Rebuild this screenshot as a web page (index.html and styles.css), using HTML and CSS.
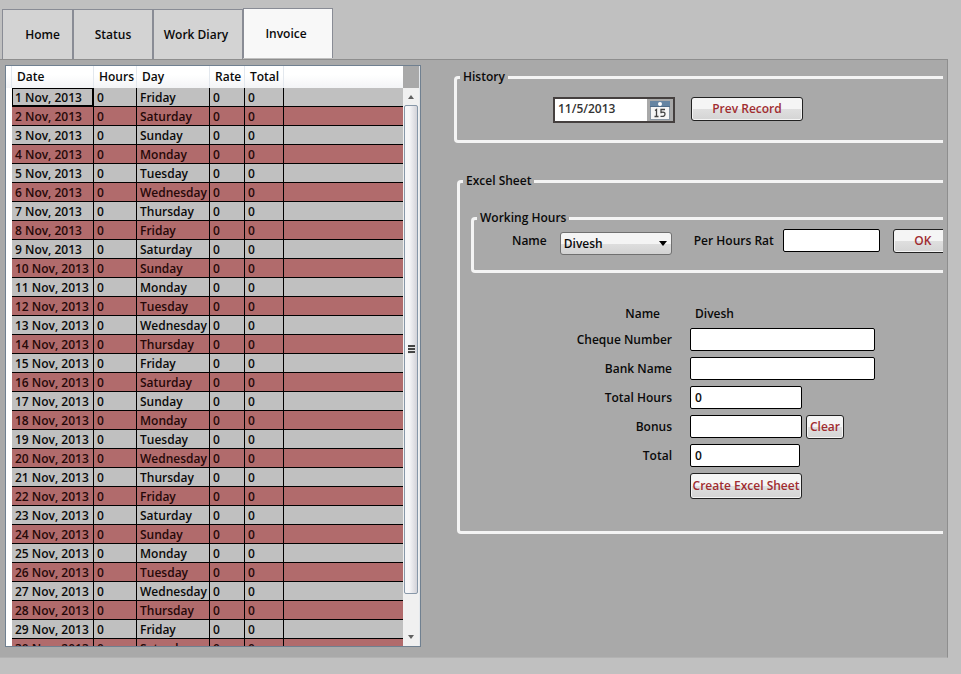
FILE: index.html
```html
<!DOCTYPE html>
<html lang="en">
<head>
<meta charset="utf-8">
<title>Invoice</title>
<link rel="stylesheet" href="styles.css">
</head>
<body>
<nav class="tabs">
  <button class="tab tab-home" type="button">Home</button>
  <button class="tab tab-status" type="button">Status</button>
  <button class="tab" type="button">Work Diary</button>
  <button class="tab active" type="button">Invoice</button>
</nav>
<main class="panel">
  <section class="grid">
    <div class="viewport">
      <table class="hours">
        <colgroup><col class="c-head"><col class="c-date"><col class="c-hours"><col class="c-day"><col class="c-rate"><col class="c-total"><col></colgroup>
        <thead><tr><th></th><th>Date</th><th>Hours</th><th>Day</th><th>Rate</th><th>Total</th><th></th></tr></thead>
        <tbody>
          <tr><td></td><td class="current">1 Nov, 2013</td><td>0</td><td>Friday</td><td>0</td><td>0</td><td></td></tr>
          <tr><td></td><td>2 Nov, 2013</td><td>0</td><td>Saturday</td><td>0</td><td>0</td><td></td></tr>
          <tr><td></td><td>3 Nov, 2013</td><td>0</td><td>Sunday</td><td>0</td><td>0</td><td></td></tr>
          <tr><td></td><td>4 Nov, 2013</td><td>0</td><td>Monday</td><td>0</td><td>0</td><td></td></tr>
          <tr><td></td><td>5 Nov, 2013</td><td>0</td><td>Tuesday</td><td>0</td><td>0</td><td></td></tr>
          <tr><td></td><td>6 Nov, 2013</td><td>0</td><td>Wednesday</td><td>0</td><td>0</td><td></td></tr>
          <tr><td></td><td>7 Nov, 2013</td><td>0</td><td>Thursday</td><td>0</td><td>0</td><td></td></tr>
          <tr><td></td><td>8 Nov, 2013</td><td>0</td><td>Friday</td><td>0</td><td>0</td><td></td></tr>
          <tr><td></td><td>9 Nov, 2013</td><td>0</td><td>Saturday</td><td>0</td><td>0</td><td></td></tr>
          <tr><td></td><td>10 Nov, 2013</td><td>0</td><td>Sunday</td><td>0</td><td>0</td><td></td></tr>
          <tr><td></td><td>11 Nov, 2013</td><td>0</td><td>Monday</td><td>0</td><td>0</td><td></td></tr>
          <tr><td></td><td>12 Nov, 2013</td><td>0</td><td>Tuesday</td><td>0</td><td>0</td><td></td></tr>
          <tr><td></td><td>13 Nov, 2013</td><td>0</td><td>Wednesday</td><td>0</td><td>0</td><td></td></tr>
          <tr><td></td><td>14 Nov, 2013</td><td>0</td><td>Thursday</td><td>0</td><td>0</td><td></td></tr>
          <tr><td></td><td>15 Nov, 2013</td><td>0</td><td>Friday</td><td>0</td><td>0</td><td></td></tr>
          <tr><td></td><td>16 Nov, 2013</td><td>0</td><td>Saturday</td><td>0</td><td>0</td><td></td></tr>
          <tr><td></td><td>17 Nov, 2013</td><td>0</td><td>Sunday</td><td>0</td><td>0</td><td></td></tr>
          <tr><td></td><td>18 Nov, 2013</td><td>0</td><td>Monday</td><td>0</td><td>0</td><td></td></tr>
          <tr><td></td><td>19 Nov, 2013</td><td>0</td><td>Tuesday</td><td>0</td><td>0</td><td></td></tr>
          <tr><td></td><td>20 Nov, 2013</td><td>0</td><td>Wednesday</td><td>0</td><td>0</td><td></td></tr>
          <tr><td></td><td>21 Nov, 2013</td><td>0</td><td>Thursday</td><td>0</td><td>0</td><td></td></tr>
          <tr><td></td><td>22 Nov, 2013</td><td>0</td><td>Friday</td><td>0</td><td>0</td><td></td></tr>
          <tr><td></td><td>23 Nov, 2013</td><td>0</td><td>Saturday</td><td>0</td><td>0</td><td></td></tr>
          <tr><td></td><td>24 Nov, 2013</td><td>0</td><td>Sunday</td><td>0</td><td>0</td><td></td></tr>
          <tr><td></td><td>25 Nov, 2013</td><td>0</td><td>Monday</td><td>0</td><td>0</td><td></td></tr>
          <tr><td></td><td>26 Nov, 2013</td><td>0</td><td>Tuesday</td><td>0</td><td>0</td><td></td></tr>
          <tr><td></td><td>27 Nov, 2013</td><td>0</td><td>Wednesday</td><td>0</td><td>0</td><td></td></tr>
          <tr><td></td><td>28 Nov, 2013</td><td>0</td><td>Thursday</td><td>0</td><td>0</td><td></td></tr>
          <tr><td></td><td>29 Nov, 2013</td><td>0</td><td>Friday</td><td>0</td><td>0</td><td></td></tr>
          <tr><td></td><td>30 Nov, 2013</td><td>0</td><td>Saturday</td><td>0</td><td>0</td><td></td></tr>
        </tbody>
      </table>
    </div>
    <div class="scrollbar">
      <div class="corner"></div>
      <svg class="arrow" viewBox="0 0 16 17"><path d="M5 11 8 7l3 4z"/></svg>
      <div class="thumb"><span class="grip"></span></div>
      <svg class="arrow" viewBox="0 0 16 17"><path d="M5 6h6l-3 4z"/></svg>
    </div>
  </section>

  <section class="forms">
    <fieldset class="history">
      <legend>History</legend>
      <div class="history-row">
        <div class="datepicker">
          <input type="text" value="11/5/2013" aria-label="Record date">
          <button type="button" aria-label="Open calendar">
            <svg viewBox="0 0 20 19">
              <rect x=".5" y=".5" width="19" height="18" fill="#f6f6f6" stroke="#8b98a5"/>
              <path d="M0 0h20v6H0z" fill="#6685a3"/>
              <path d="M0 5h20v1H0z" fill="#4f6c89"/>
              <circle cx="10" cy="3" r="2" fill="#fff"/>
              <path d="M5 9.500 6.500 8.500V15.500M4.500 15.500h4M15 8.500h-4v3q4-1 4 1.500 0 3-4.500 2.300" fill="none" stroke="#444" stroke-width="1.300"/>
            </svg>
          </button>
        </div>
        <button class="btn prev" type="button">Prev Record</button>
      </div>
    </fieldset>

    <fieldset class="sheet">
      <legend>Excel Sheet</legend>
      <div class="sheet-body">
        <fieldset class="working">
          <legend>Working Hours</legend>
          <div class="working-row">
            <label for="employee">Name</label>
            <div class="combo">
              <select id="employee"><option>Divesh</option></select>
              <svg viewBox="0 0 8 5"><path d="M0 0h8L4 5z"/></svg>
            </div>
            <label for="rate">Per Hours Rat</label>
            <input class="field rate" id="rate" type="text">
            <button class="btn ok" type="button">OK</button>
          </div>
        </fieldset>
        <div class="details">
          <span class="name-label">Name</span><output class="name-value">Divesh</output>
          <label for="cheque">Cheque Number</label><input class="field wide" id="cheque" type="text">
          <label for="bank">Bank Name</label><input class="field wide" id="bank" type="text">
          <label for="total-hours">Total Hours</label><input class="field" id="total-hours" type="text" value="0">
          <label for="bonus">Bonus</label>
          <div class="bonus-row"><input class="field" id="bonus" type="text"><button class="btn clear" type="button">Clear</button></div>
          <label for="total">Total</label><input class="field total" id="total" type="text" value="0">
          <button class="btn create" type="button">Create Excel Sheet</button>
        </div>
      </div>
    </fieldset>
  </section>
</main>
</body>
</html>
```
FILE: styles.css
```css
* { box-sizing: border-box; }

body {
  margin: 0;
  min-height: 100vh;
  padding: 8px 13px 16px 0;
  display: flex;
  flex-direction: column;
  background: #c0c0c0;
  color: #0a0a0a;
  font: 600 12px/16px "Open Sans", "Noto Sans", sans-serif;
}

button, input, select { font: inherit; color: inherit; }

.tabs { display: flex; align-items: flex-end; padding-left: 2px; height: 51px; }

.tab {
  height: 50px;
  width: 90px;
  padding: 0 4px 0 0;
  background: #d3d3d3;
  border: 1px solid #898c95;
  border-bottom: 0;
}
.tab-home { width: 71px; padding: 0 0 0 10px; }
.tab-status { width: 80px; padding: 0; }
.tab.active { align-self: flex-start; background: #f8f8f8; }

.panel {
  flex: 1;
  display: flex;
  gap: 33px;
  padding: 5px 4px 10px 5px;
  background: #a9a9a9;
  border: 1px solid #8e8e8e;
  border-left: 0;
  border-bottom-color: #b2b2b2;
}

/* Day-by-day data grid */
.grid {
  flex: none;
  width: 416px;
  display: flex;
  border: 1px solid #708090;
  background: #fff;
}
.viewport { flex: 1; height: 0; min-height: 100%; overflow: hidden; }
.hours { width: 100%; table-layout: fixed; border-collapse: separate; border-spacing: 0; }
.c-head { width: 6px; }
.c-date { width: 82px; }
.c-hours { width: 43px; }
.c-day { width: 73px; }
.c-rate { width: 35px; }
.c-total { width: 39px; }

.hours th {
  height: 22px;
  padding: 0 0 0 5px;
  font-weight: 600;
  text-align: left;
  border-right: 1px solid #e3e8ee;
  background: linear-gradient(#fff 40%, #f3f4f6);
}
.hours td {
  height: 19px;
  padding: 1px 0 0 3px;
  border-right: 1px solid #000;
  border-bottom: 1px solid #000;
  background: #c0c0c0;
  white-space: nowrap;
}
.hours tr:nth-child(even) td { background: #b16b6c; color: #260808; }
.hours tr td:first-child, .hours tr:nth-child(even) td:first-child {
  padding: 0;
  background: #fff;
  border-color: #fff;
}
.hours td:last-child, .hours th:last-child { border-right: 0; }
.hours td.current { box-shadow: inset 0 0 0 1px #000; }

.scrollbar { width: 17px; display: flex; flex-direction: column; background: #f0f0f0; border-right: 1px solid #e4e8ec; }
.corner { height: 22px; background: #a9a9a9; }
.arrow { width: 16px; height: 17px; fill: #606060; }
.thumb {
  flex: 1;
  margin: 0 1px 35px;
  display: flex;
  align-items: center;
  justify-content: center;
  border: 1px solid #8797a8;
  border-radius: 2px;
  background: linear-gradient(90deg, #f6f6f8 35%, #d2d2d8);
}
.grip { width: 7px; height: 9px; background: repeating-linear-gradient(#444 0 2px, #e6e6e6 2px 3px); }

/* Group boxes */
.forms { flex: 1; min-width: 0; overflow: hidden; padding-top: 4px; }

fieldset {
  min-width: 0;
  margin: 0;
  padding: 0;
  border: 3px solid #f4f4f4;
  border-right: 0;
  border-radius: 4px 0 0 4px;
}
legend { margin-left: 3px; padding: 0 3px; }

.history-row { display: flex; align-items: flex-start; gap: 16px; padding: 12px 0 17px 96px; }

.datepicker { display: flex; width: 122px; height: 26px; border: 2px solid #45403f; background: #a9a9a9; }
.datepicker input { width: 92px; min-width: 0; padding: 0 0 3px 3px; border: 0; background: #fff; color: #333; }
.datepicker button { padding: 0 0 0 3px; border: 0; background: none; }
.datepicker svg { display: block; width: 20px; height: 19px; }

.btn {
  height: 24px;
  padding: 0;
  border: 1px solid #222;
  border-radius: 3px;
  background: linear-gradient(#f5f5f5 50%, #dfdfdf 50%, #d4d4d4);
  box-shadow: inset 0 0 0 1px #f4f4f4;
  color: #a02c30;
  white-space: nowrap;
}
.prev { width: 112px; }

.sheet { margin: 30px 0 0 3px; }
.sheet-body { padding: 21px 0 32px 11px; }

.working-row { display: flex; align-items: center; padding: 0 0 15px 38px; }
.working-row label { flex: none; }
.combo { position: relative; flex: none; margin: 6px 22px 0 13px; }
.combo select {
  display: block;
  width: 112px;
  height: 23px;
  padding: 0 3px;
  appearance: none;
  border: 1px solid #707070;
  border-radius: 3px;
  background: linear-gradient(#f4f4f4 50%, #dedede 50%, #d2d2d2);
}
.combo svg { position: absolute; right: 5px; top: 9px; width: 8px; height: 5px; }

.field {
  width: 112px;
  height: 23px;
  padding: 0 4px;
  border: 1px solid #000;
  border-radius: 2px;
  background: #fff;
}
.wide { width: 185px; }
.total { width: 110px; }
.rate { flex: none; width: 97px; margin-left: 9px; }
.ok { flex: none; width: 60px; margin-left: 13px; }

.details {
  display: grid;
  grid-template-columns: 201px 1fr;
  gap: 6px 18px;
  align-items: center;
  justify-items: start;
  margin-top: 33px;
}
.details > label, .name-label { justify-self: end; }
.name-label { padding-right: 12px; }
.name-value { padding-left: 5px; }
.bonus-row { display: flex; gap: 4px; height: 23px; }
.clear { width: 38px; }
.create { grid-column: 2; width: 112px; height: 26px; }
```
